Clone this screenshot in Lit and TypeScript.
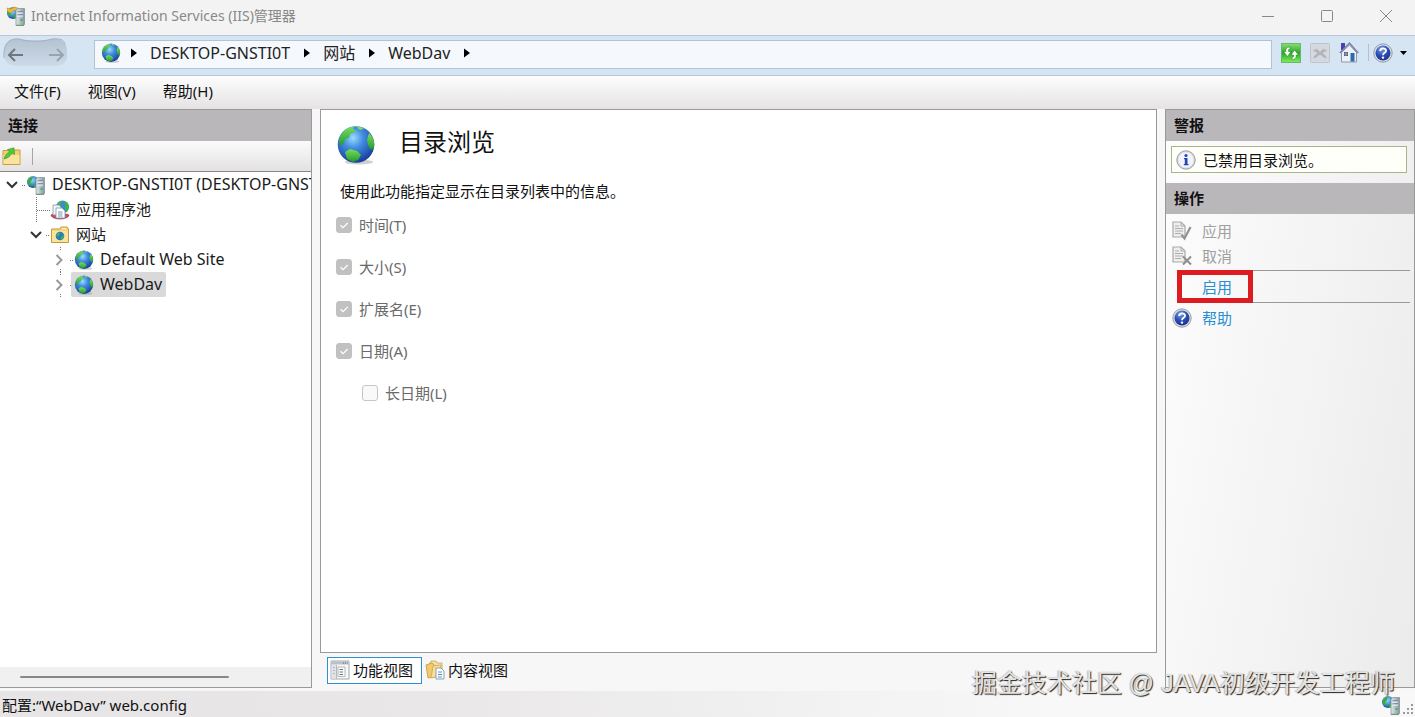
import { LitElement, html, svg, css } from "lit";
import { customElement, property } from "lit/decorators.js";
import { classMap } from "lit/directives/class-map.js";

const globe = (size: number) => html`<svg width=${size} height=${size} viewBox="0 0 40 40" aria-hidden="true">
  <defs>
    <radialGradient id="sea" cx="42%" cy="32%" r="68%">
      <stop offset="0" stop-color="#9cdcfd" /><stop offset=".4" stop-color="#438ee2" /><stop offset="1" stop-color="#173f9c" />
    </radialGradient>
    <linearGradient id="land" x1="0" y1="0" x2="0" y2="1">
      <stop offset="0" stop-color="#7ade59" /><stop offset="1" stop-color="#219a30" />
    </linearGradient>
  </defs>
  <ellipse cx="23" cy="37" rx="14" ry="2.5" fill="#777" opacity=".35" />
  <circle cx="20" cy="19.5" r="18.3" fill="url(#sea)" />
  <path d="M3 15C5 7 11 2 18 1.400L17 4L20 6L14 9L13 13L9 14L8 18L4 21Z" fill="url(#land)" />
  <path d="M21 1.300L28 3L25 5L22 4Z" fill="#7edb5e" />
  <path d="M33 8C37 12 39 17 38 22L35 25L32 20L31 15Z" fill="url(#land)" />
  <path d="M9 27L14 24L21 26L25 30L22 35L17 37L11 34Z" fill="url(#land)" />
</svg>`;

const serverIcon = (size: number, star = false) => html`<svg width=${size} height=${size} viewBox="0 0 20 20" aria-hidden="true">
  <defs>
    <radialGradient id="orb" cx="45%" cy="35%" r="65%"><stop offset="0" stop-color="#8fd8fb" /><stop offset="1" stop-color="#17539f" /></radialGradient>
    <linearGradient id="tower"><stop offset="0" stop-color="#e3e9ee" /><stop offset="1" stop-color="#8295a4" /></linearGradient>
  </defs>
  <circle cx="7" cy="7" r="6" fill="url(#orb)" />
  <path d="M2 5C3 3 5 2 7 1.500L6 5L4 7L5 10L3 10C1 8 1 7 2 5ZM8 9L11 9L11 12L8 12.500Z" fill="#39ae3b" />
  ${star ? svg`<path d="M1 2L5 3L8 1L12 2L11 5L8 4L5 7L2 6Z" fill="#f0b93c" stroke="#b98617" stroke-width=".5" />` : ""}
  <path d="M10 4L12 2.500H18.500V18.500L17 19.500H10Z" fill="url(#tower)" stroke="#7c8c99" stroke-width=".7" />
  <path d="M11.500 6H17M11.500 9H17" stroke="#586b79" /><path d="M11.500 7H17M11.500 10H17" stroke="#fff" />
  <rect x="14.500" y="13" width="2" height="2" fill="#47b54b" />
  <path d="M10 19.300H18" stroke="#6f9a51" />
</svg>`;

const poolIcon = html`<svg width="20" height="20" viewBox="0 0 20 20" aria-hidden="true">
  <circle cx="12.500" cy="7" r="6.500" fill="#3a8bd4" />
  <path d="M13 1C17 1 19 4 19 8L17 12L15 8L16 5ZM8 3L12 1L11 5L8 6Z" fill="#42b83e" />
  <path d="M1 15A9 4 0 0 0 19 15L16 14H3Z" fill="#c74a5a" stroke="#8f2338" stroke-width=".6" />
  <path d="M3 5H9L11 7V15H3Z" fill="#f3f5f7" stroke="#8797a5" stroke-width=".8" />
  <path d="M6 8H12L15 11V18H6Z" fill="#fff" stroke="#8797a5" stroke-width=".8" />
  <path d="M8 12H12.500M8 14H12.500M8 16H12.500" stroke="#6f95bd" />
</svg>`;

const sitesIcon = html`<svg width="20" height="20" viewBox="0 0 20 20" aria-hidden="true">
  <path d="M1.500 4H10L11 2H17L18.500 4V17.500H1.500Z" fill="#f6d77c" stroke="#c19a3f" />
  <path d="M2 6H18V17H2Z" fill="#fae49b" /><path d="M12 3.500H16" stroke="#fff6cf" />
  <circle cx="10" cy="11" r="4.300" fill="#2c78c8" />
  <path d="M6 10L9 7L10 9L8 12ZM11 12L14 10L13 14L11 15Z" fill="#46b93d" />
</svg>`;

const connectIcon = html`<svg width="19" height="19" viewBox="0 0 19 19" aria-hidden="true">
  <path d="M1 3.500H7L8 3H18V17.500H1Z" fill="#f4ce73" stroke="#c89b3d" />
  <path d="M1.500 8H17.500V17H1.500Z" fill="#fae2a0" />
  <path d="M2 12C3 8 5 6 7.500 5L5.500 2.500L12 .8L12.500 7.500L10 6C8 9.500 6 11 2 12Z" fill="#55c63f" stroke="#2e9b26" stroke-width=".6" />
</svg>`;

const refreshIcon = html`<svg width="20" height="20" viewBox="0 0 20 20" aria-hidden="true">
  <defs><linearGradient id="fresh" x1="0" y1="0" x2="0" y2="1"><stop offset="0" stop-color="#8ade72" /><stop offset=".5" stop-color="#28a828" /><stop offset="1" stop-color="#7ff05c" /></linearGradient></defs>
  <rect x=".5" y=".5" width="19" height="19" fill="url(#fresh)" stroke="#6db471" />
  <path d="M9 4C5 4 4.500 7 5 8.500H2.500L6.500 13.500L10 8.500H7.500C7 7 7.500 6 9 6ZM11 16.500C15 16.500 15.500 13.500 15 12H17.500L13.500 7L10 12H12.500C13 13.500 12.500 14.500 11 14.500Z" fill="#fff" stroke="#16801d" stroke-width=".5" />
</svg>`;

const stopIcon = html`<svg width="20" height="20" viewBox="0 0 20 20" aria-hidden="true">
  <rect x=".5" y=".5" width="19" height="19" rx="1" fill="#d5d8de" stroke="#c0c3ca" />
  <path d="M3.500 7C6 8 8 9 10 11C12 9 14 8 16.500 7M4 15C6 11.500 8 10.500 10 10C12 10.500 14 11.500 16 15M6 6L14 14M14 6L6 14" fill="none" stroke="#b0b3b9" stroke-width="1.600" />
</svg>`;

const homeIcon = html`<svg width="20" height="21" viewBox="0 0 20 21" aria-hidden="true">
  <path d="M2 1H6V8H2Z" fill="#4a3fae" />
  <path d="M2.500 10.500L10.500 3L17.500 10.500V20H2.500Z" fill="#edf0f5" stroke="#8e97ab" />
  <path d="M.800 11L10.500 1.200L19.200 11" fill="none" stroke="#7a82ac" stroke-width="1.500" />
  <rect x="5" y="10" width="4" height="4" fill="#555d78" /><path d="M7 10V14M5 12H9" stroke="#b9bfd0" stroke-width=".6" />
  <rect x="11.500" y="11" width="4" height="8.500" fill="#2c6cae" />
</svg>`;

const badge = (mark: "?" | "i") => html`<svg width="20" height="20" viewBox="0 0 20 20" aria-hidden="true">
  <defs><radialGradient id="blue" cx="40%" cy="25%" r="80%"><stop offset="0" stop-color="#7fa3e4" /><stop offset=".5" stop-color="#2b50b8" /><stop offset="1" stop-color="#1a2f8a" /></radialGradient></defs>
  <circle cx="10" cy="10" r="9.200" fill="#d9dce2" stroke="#979ca5" />
  ${mark === "?"
    ? svg`<circle cx="10" cy="10" r="7.500" fill="url(#blue)" />
        <path d="M7.200 8C7.200 4.500 13 4.500 13 7.700C13 10 10 9.700 10 12.300" fill="none" stroke="#fff" stroke-width="1.900" /><circle cx="10" cy="14.600" r="1.200" fill="#fff" />`
    : svg`<circle cx="10" cy="10" r="7.500" fill="#f1f4fb" />
        <circle cx="10" cy="5.500" r="1.600" fill="#2244b4" /><path d="M8 8H11.500V14H12.500V15.300H7.800V14H8.800V9.200H8Z" fill="#2244b4" />`}
</svg>`;

const docIcon = (mark: "check" | "cross") => html`<svg width="20" height="20" viewBox="0 0 20 20" aria-hidden="true">
  <path d="M1 1H9L13 5V16H1Z" fill="#eee" stroke="#a9a9a9" stroke-width="1.200" />
  <path d="M9 1V5H13M3 5H7M3 7.500H11M3 10H11M3 12.500H9" fill="none" stroke="#adadad" />
  ${mark === "check"
    ? svg`<path d="M9.500 13.500L12.500 17.500L18.500 6" fill="none" stroke="#929292" stroke-width="2.200" />`
    : svg`<path d="M11 10.500L19 18.500M19 10.500L11 18.500" stroke="#8e8e8e" stroke-width="2" />`}
</svg>`;

const featuresIcon = html`<svg width="20" height="20" viewBox="0 0 20 20" aria-hidden="true">
  <path d="M1 1H19V19H1Z" fill="#f8f8f8" stroke="#a3a8ad" />
  <path d="M1.500 1.500H18.500V4.500H1.500Z" fill="#b9c0c7" /><path d="M13 3H17.500" stroke="#59636d" stroke-dasharray="1 1" />
  <path d="M1.500 5H6V18.500H1.500Z" fill="#dfe4e8" /><path d="M6.500 5V19M3 7.500H5M3 10.500H5M3 13.500H5" stroke="#b2b8bd" />
  <path d="M8 7H15V16.500H8Z" fill="#fff" stroke="#b2b7bc" /><path d="M9.500 9.500H13M9.500 12H13M9.500 14.500H13" stroke="#6a7580" />
</svg>`;

const contentIcon = html`<svg width="20" height="20" viewBox="0 0 20 20" aria-hidden="true">
  <path d="M5 3L6 1H11L12 3H17V14H5Z" fill="#f3dfa0" stroke="#c7a85b" stroke-width=".8" />
  <path d="M1 5L7 3L10 6V17L3 18Z" fill="#f2ca6c" stroke="#bf9641" stroke-width=".8" />
  <path d="M8 6L16 5L15 16L6 18Z" fill="#f9df98" stroke="#cda750" stroke-width=".8" />
  <path d="M11 8H16L19 11V19H11Z" fill="#fff" stroke="#7d98b3" stroke-width=".9" /><path d="M13 12H17M13 14.500H17M13 17H17" stroke="#5890c5" />
</svg>`;

interface TreeItem { label: string; depth: number; twisty: "open" | "closed" | "leaf"; icon: unknown; latin?: boolean; selected?: boolean; }

const TREE: TreeItem[] = [
  { label: "DESKTOP-GNSTI0T (DESKTOP-GNST", depth: 0, twisty: "open", icon: serverIcon(20), latin: true },
  { label: "应用程序池", depth: 1, twisty: "leaf", icon: poolIcon },
  { label: "网站", depth: 1, twisty: "open", icon: sitesIcon },
  { label: "Default Web Site", depth: 2, twisty: "closed", icon: globe(20), latin: true },
  { label: "WebDav", depth: 2, twisty: "closed", icon: globe(20), latin: true, selected: true },
];

const FONT = css`"Noto Sans", "Noto Sans CJK SC", sans-serif`;

@customElement("iis-tree")
class IisTree extends LitElement {
  @property({ attribute: false }) items: TreeItem[] = [];

  static styles = css`
    :host { display: block; flex: 1; min-height: 0; overflow: hidden; background: #fff; }
    .row { display: flex; height: 25px; padding-left: calc(var(--depth) * 24px); }
    .twisty { flex: none; width: 23px; height: 25px; overflow: visible; }
    .guide { fill: none; stroke: #777; stroke-dasharray: 1 1; }
    .open { fill: none; stroke: #333; stroke-width: 2; }
    .closed { fill: none; stroke: #999; stroke-width: 2; }
    .item { display: flex; flex: none; align-items: center; gap: 6px; padding: 0 4px 0 3px; border: 0; border-radius: 2px; background: none; color: #1a1a1a; font: 15px/22px ${FONT}; white-space: nowrap; }
    .item span { padding-bottom: 2px; }
    .item.latin { font-size: 16px; }
    .item.selected { background: #d9d9d9; }
    svg { display: block; }
  `;

  private twisty(item: TreeItem) {
    if (item.twisty === "leaf") return svg`<path class="guide" d="M12.500 0V25M13 13.500H26" />`;
    return item.twisty === "open"
      ? svg`<path class="open" d="M7 10L12 15L17 10" /><path class="guide" d="M22 13.500H26" />`
      : svg`<path class="closed" d="M8.500 8L13.500 13L8.500 18" /><path class="guide" d="M12.500 0V3M12.500 22V25M22 13.500H26" />`;
  }

  render() {
    return html`<div role="tree">${this.items.map((item) => html`
      <div class="row" role="treeitem" style="--depth:${item.depth}">
        <svg class="twisty" aria-hidden="true">${this.twisty(item)}</svg>
        <button class=${classMap({ item: true, latin: !!item.latin, selected: !!item.selected })}>${item.icon}<span>${item.label}</span></button>
      </div>`)}</div>`;
  }
}

const FIELDS = [
  { id: "time", label: "时间(T)", checked: true, nested: false },
  { id: "size", label: "大小(S)", checked: true, nested: false },
  { id: "extension", label: "扩展名(E)", checked: true, nested: false },
  { id: "date", label: "日期(A)", checked: true, nested: false },
  { id: "long-date", label: "长日期(L)", checked: false, nested: true },
];

@customElement("app-root")
class AppRoot extends LitElement {
  static styles = css`
    * { box-sizing: border-box; }
    :host { position: relative; display: flex; flex-direction: column; height: 100vh; overflow: hidden; background: #f7f7f7; color: #111; font: 15px/20px ${FONT}; }
    svg { display: block; flex: none; }
    button { padding: 0; border: 0; background: none; color: inherit; font: inherit; white-space: nowrap; }
    h1, h2, p { margin: 0; font: inherit; }

    .titlebar { display: flex; flex: none; align-items: center; height: 35px; padding: 0 22px 4px 6px; background: #f3f3f3; color: #888; font-size: 14px; }
    .title { flex: 1; margin-left: 5px; }
    .window-buttons { display: flex; gap: 45px; }

    .address { display: flex; flex: none; align-items: center; height: 41px; padding: 0 8px 2px 3px; border: solid #b8c8d6; border-width: 1px 0; background: #d6e5f3; }
    .history { width: 65px; height: 31px; margin: 0 26px 3px 0; }
    .crumbs { display: flex; flex: 1; align-items: center; height: 29px; padding: 0 0 3px 6px; border: 1px solid #b4c3d2; background: #f5f9fd; color: #222; font-size: 16px; }
    .crumb { margin: 0 14px 0 13px; }
    .crumb-globe { margin-right: 10px; }
    .address-tools { display: flex; align-items: center; gap: 9px; margin: 0 0 4px 9px; }
    .divider { width: 1px; height: 17px; background: #b7c0c9; }
    .help-menu { display: flex; align-items: center; gap: 7px; margin-left: -5px; }

    .menubar { display: flex; flex: none; align-items: center; gap: 27px; height: 33px; padding: 0 0 3px 14px; background: linear-gradient(#fdfdfd, #e5e3e4); }

    .workspace { display: grid; flex: 1; grid-template-columns: 312px minmax(0, 1fr) 250px; gap: 8px; min-height: 0; }
    .connections, .actions { display: flex; flex-direction: column; min-height: 0; border: 1px solid #999; }
    .connections { border-left: 0; background: #fff; }
    .actions { background: linear-gradient(100deg, #fdfdfd, #ebebeb); }
    .heading { flex: none; padding: 5px 8px 6px; background: #bab7bb; font-weight: 700; }
    .toolbar { display: flex; flex: none; align-items: center; gap: 11px; height: 31px; padding-left: 2px; border-bottom: 1px solid #888; background: linear-gradient(#fbfbfb, #e3e1e2); }
    .toolbar .divider { background: #aaa69f; }
    .scrollbar { flex: none; height: 20px; padding: 9px 82px 0 20px; background: #f0f0f0; }
    .thumb { height: 2px; border-radius: 1px; background: #888; }

    .center { display: flex; flex-direction: column; min-width: 0; }
    .page { flex: 1; padding: 15px; border: 1px solid #999; background: #fff; }
    .page-title { display: flex; align-items: center; gap: 23px; }
    .page-title h1 { padding-bottom: 6px; font-size: 24px; line-height: 34px; }
    .intro { margin: 16px 0 14px 4px; }
    .fields { display: grid; gap: 22px; }
    .field { display: flex; align-items: center; gap: 7px; color: #6a6a6a; }
    .field.nested { padding-left: 26px; }
    .field input { appearance: none; width: 16px; height: 16px; margin: 0; border: 1px solid #c5c5c5; border-radius: 3px; background: #f9f9f9; }
    .field input:checked { border-color: #c1c1c1; background: #c1c1c1 url("data:image/svg+xml,%3Csvg xmlns='http://www.w3.org/2000/svg' viewBox='0 0 14 14'%3E%3Cpath d='M3.500 7.300L6 9.700L10.700 5' fill='none' stroke='white' stroke-width='1.200'/%3E%3C/svg%3E"); }
    .views { display: flex; align-items: center; gap: 2px; padding: 4px 7px; }
    .view { display: flex; align-items: center; gap: 3px; height: 27px; padding: 0 7px 2px 2px; border: 1px solid transparent; }
    .view.current { padding-right: 8px; border-color: #2f8fd0; background: #fff; }
    .view:not(.current) { padding-left: 0; }

    .alert { display: flex; flex: none; align-items: center; gap: 7px; height: 27px; margin: 5px 7px 10px 5px; padding-left: 4px; border: 1px solid #a9b48a; background: #fffffa; }
    .commands { display: flex; flex-direction: column; padding: 4px 4px 0 6px; }
    .command { display: flex; align-items: center; gap: 10px; height: 25px; }
    .command.disabled { color: #a0a0a0; }
    .command a { color: #2a8dd4; text-decoration: none; }
    .command.boxed { position: relative; height: 33px; margin: 2px 0 2px 5px; padding-left: 25px; border: solid #999; border-width: 1px 0; }
    .marker { position: absolute; inset: -1px auto -1px 0; width: 76px; border: 5px solid #dd1c22; pointer-events: none; }

    .status { display: flex; flex: none; align-items: center; justify-content: space-between; height: 26px; margin-top: 3px; padding: 2px 2px 0; background: linear-gradient(90deg, #e6e4e5, #e9e7e8 30%, #f8f8f8 75%); }
    .status-right { display: flex; align-items: flex-end; gap: 2px; }
    .watermark { position: absolute; right: 20px; bottom: 16px; color: #e4e4e4; font-family: "Liberation Sans", "Noto Sans CJK SC", sans-serif; font-size: 25px; line-height: 36px; text-shadow: 1px 1px 1px #222, -1px 0 1px #bbb; white-space: nowrap; pointer-events: none; }
  `;

  private arrow() {
    return html`<svg width="6" height="10" aria-hidden="true"><path d="M0 0.500L6 5L0 9.500Z" fill="#000" /></svg>`;
  }

  render() {
    return html`
      <header class="titlebar">
        ${serverIcon(20, true)}
        <span class="title">Internet Information Services (IIS)管理器</span>
        <div class="window-buttons">
          <button aria-label="最小化"><svg width="14" height="14"><path d="M1 7.500H13" stroke="#888" /></svg></button>
          <button aria-label="最大化"><svg width="14" height="14"><rect x="1.500" y="1.500" width="11" height="11" rx="1" fill="none" stroke="#888" /></svg></button>
          <button aria-label="关闭"><svg width="14" height="14"><path d="M1 1L13 13M13 1L1 13" stroke="#888" /></svg></button>
        </div>
      </header>

      <nav class="address" aria-label="地址">
        <svg class="history" viewBox="0 0 65 31" aria-hidden="true">
          <defs><linearGradient id="pill" x1="0" y1="0" x2="0" y2="1"><stop offset="0" stop-color="#b5c2d1" /><stop offset="1" stop-color="#cddae8" /></linearGradient></defs>
          <path d="M1 15C0 5 7 0 16 1C26 3 39 3 49 1C59 0 64 5 64 14V19C63 26 58 28 50 28H14C6 28 1 24 1 15Z" fill="url(#pill)" />
          <path d="M1 20C0 5 7 0 16 1C26 4 39 4 49 1C57 0 61 2 62 6" fill="none" stroke="#a3b1c1" />
          <path d="M20 17H6M12 11L6 17L12 23" fill="none" stroke="#6c7781" stroke-width="2" />
          <path d="M46 17H60M54 11L60 17L54 23" fill="none" stroke="#98a3ae" stroke-width="2" />
        </svg>
        <div class="crumbs">
          <span class="crumb-globe">${globe(20)}</span>${this.arrow()}
          <button class="crumb">DESKTOP-GNSTI0T</button>${this.arrow()}
          <button class="crumb">网站</button>${this.arrow()}
          <button class="crumb">WebDav</button>${this.arrow()}
        </div>
        <div class="address-tools">
          <button aria-label="刷新">${refreshIcon}</button>
          <button aria-label="停止" disabled>${stopIcon}</button>
          <button aria-label="主页">${homeIcon}</button>
          <span class="divider"></span>
          <button class="help-menu" aria-label="帮助">${badge("?")}<svg width="7" height="4"><path d="M0 0H7L3.500 4Z" /></svg></button>
        </div>
      </nav>

      <nav class="menubar" aria-label="菜单">
        <button>文件(F)</button><button>视图(V)</button><button>帮助(H)</button>
      </nav>

      <main class="workspace">
        <section class="connections">
          <h2 class="heading">连接</h2>
          <div class="toolbar"><button aria-label="连接">${connectIcon}</button><span class="divider"></span></div>
          <iis-tree .items=${TREE}></iis-tree>
          <div class="scrollbar"><div class="thumb"></div></div>
        </section>

        <section class="center">
          <div class="page">
            <div class="page-title">${globe(40)}<h1>目录浏览</h1></div>
            <p class="intro">使用此功能指定显示在目录列表中的信息。</p>
            <div class="fields">
              ${FIELDS.map((f) => html`<div class=${classMap({ field: true, nested: f.nested })}>
                <input type="checkbox" id=${f.id} .checked=${f.checked} disabled /><label for=${f.id}>${f.label}</label>
              </div>`)}
            </div>
          </div>
          <div class="views">
            <button class="view current">${featuresIcon}功能视图</button>
            <button class="view">${contentIcon}内容视图</button>
          </div>
        </section>

        <aside class="actions">
          <h2 class="heading">警报</h2>
          <div class="alert">${badge("i")}<span>已禁用目录浏览。</span></div>
          <h2 class="heading">操作</h2>
          <div class="commands">
            <button class="command disabled" disabled>${docIcon("check")}应用</button>
            <button class="command disabled" disabled>${docIcon("cross")}取消</button>
            <div class="command boxed"><a href="#enable">启用</a><span class="marker"></span></div>
            <div class="command">${badge("?")}<a href="#help">帮助</a></div>
          </div>
        </aside>
      </main>

      <footer class="status">
        <span>配置:“WebDav” web.config</span>
        <span class="status-right">${serverIcon(20)}
          <svg width="10" height="12" aria-hidden="true"><path d="M8 1H10V3H8ZM4 5H6V7H4ZM8 5H10V7H8ZM0 9H2V11H0ZM4 9H6V11H4ZM8 9H10V11H8Z" fill="#999" /></svg>
        </span>
      </footer>
      <div class="watermark">掘金技术社区 @ JAVA初级开发工程师</div>
    `;
  }
}
